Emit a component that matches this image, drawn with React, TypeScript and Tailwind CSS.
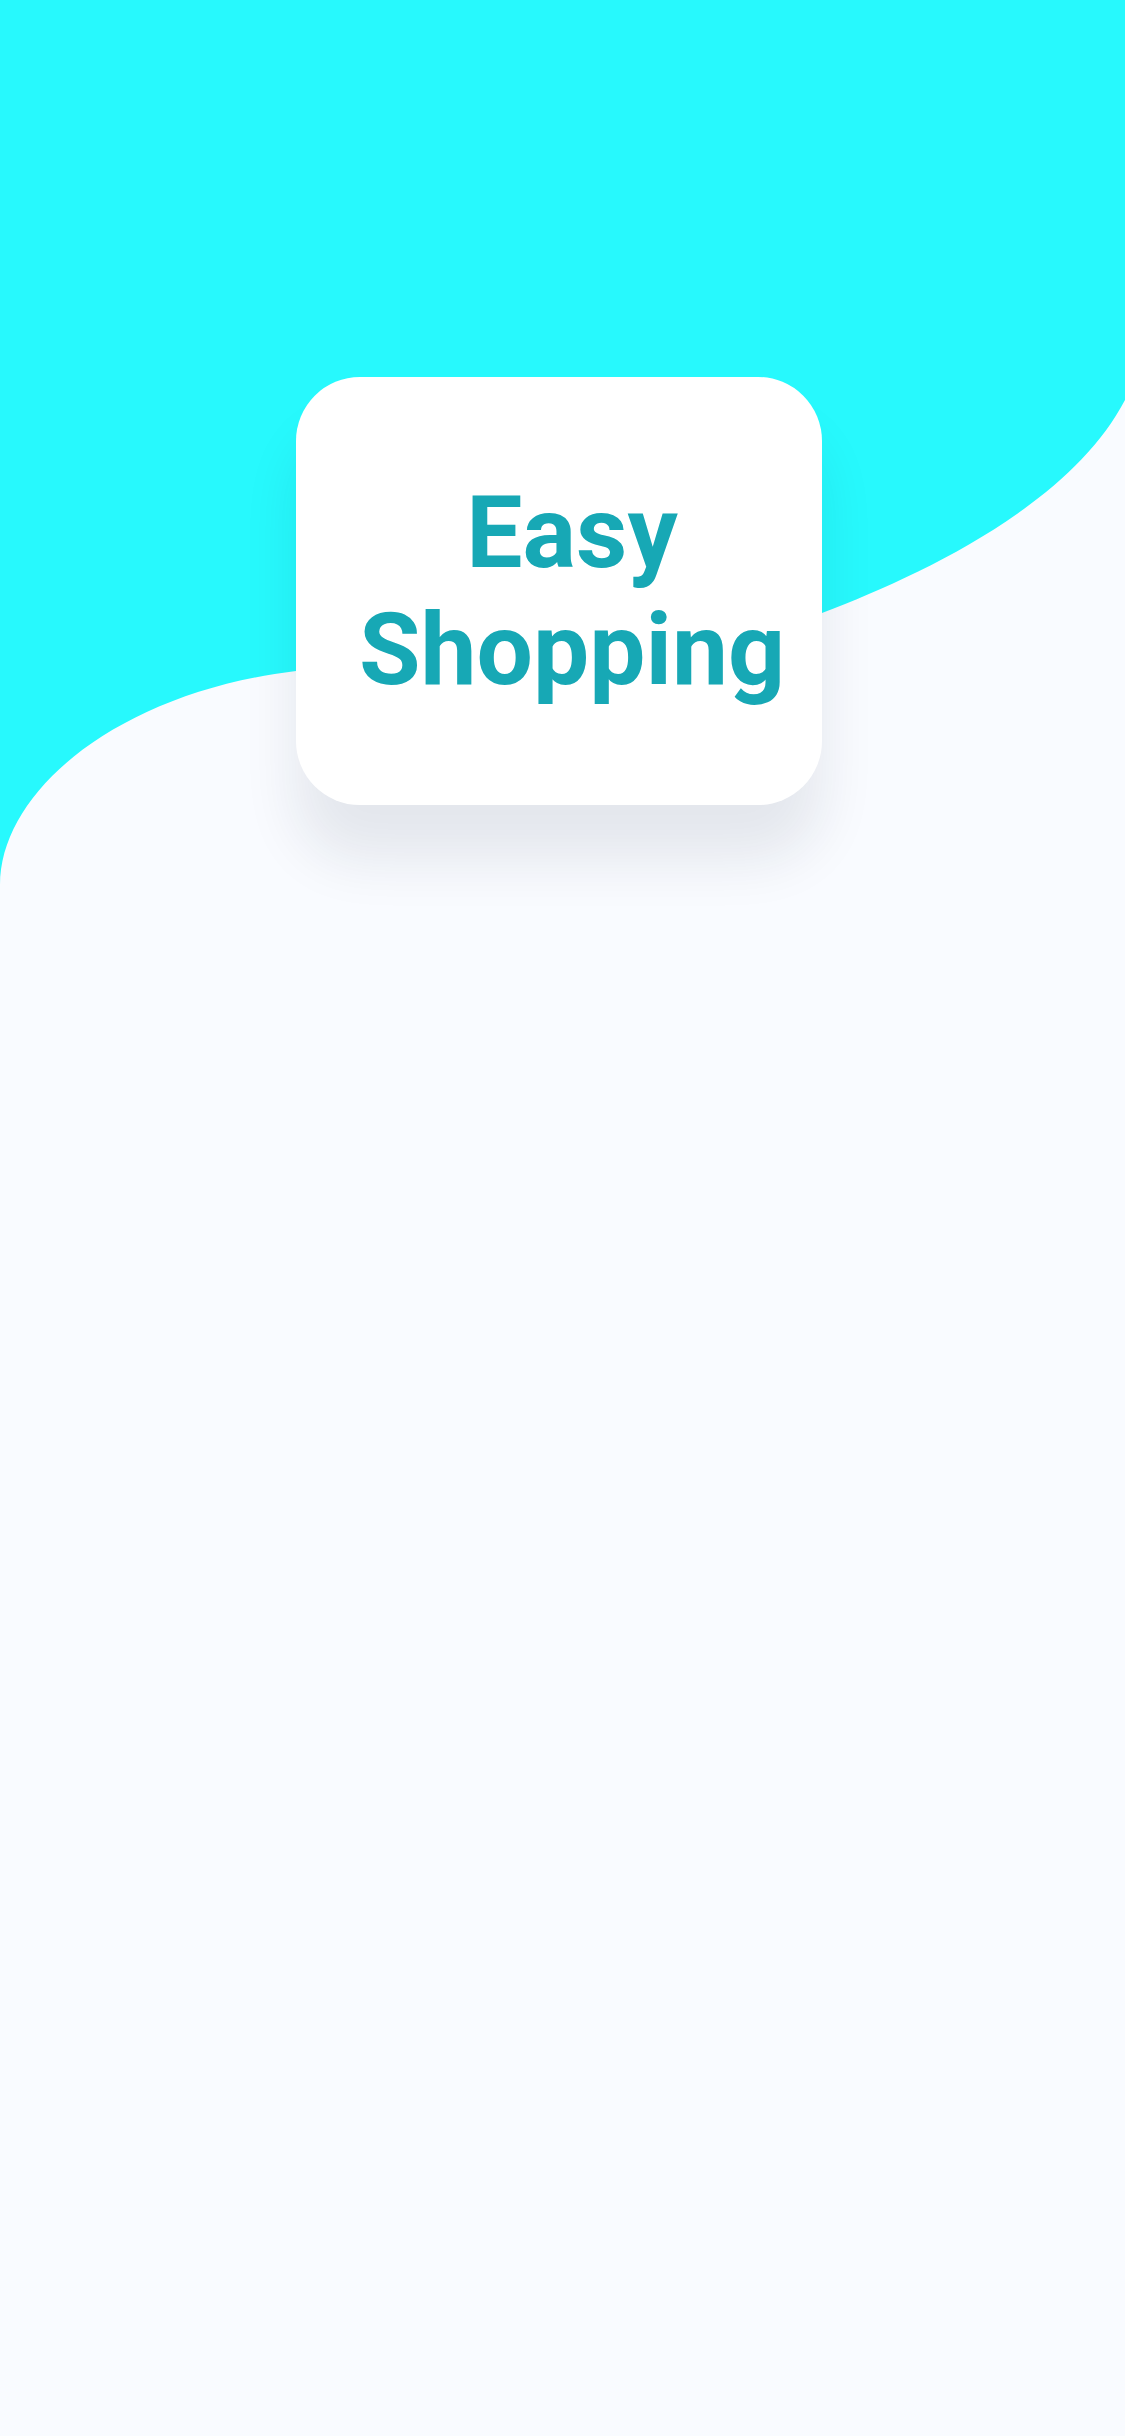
import React from "react";

export default function App() {
  const d =
    "M0,885 C0,790 120,692 296,671 C471,650 647,679 822,613 C922,575 1070,505 1125,400 L1125,0 L0,0 Z";
  return (
    <div
      className="relative w-[1125px] h-[2436px] bg-[#F9FBFF] overflow-hidden"
      style={{ fontFamily: "Roboto, 'Noto Sans', sans-serif" }}
    >
      <svg className="absolute left-0 top-0" width="1125" height="1000" viewBox="0 0 1125 1000">
        <path d={d} fill="#27F9FD" />
      </svg>
      <div className="relative pt-[377px] pl-[296px]">
        <div className="w-[526px] h-[428px] rounded-[64px] bg-white shadow-[0_55px_55px_rgba(20,30,60,0.09)] flex items-center justify-center pl-[26px]">
          <div className="text-center font-bold text-[100px] leading-[117px] text-[#17A8B5] whitespace-nowrap">
            Easy
            <br />
            Shopping
          </div>
        </div>
      </div>
    </div>
  );
}
